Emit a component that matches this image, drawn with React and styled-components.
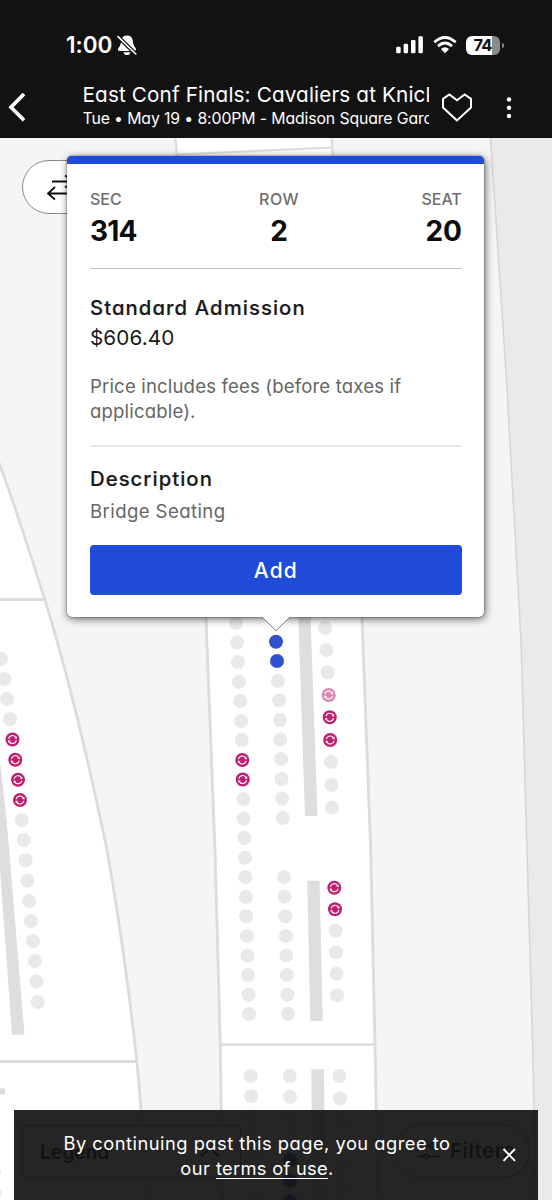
import React from "react";
import styled, { createGlobalStyle } from "styled-components";

const Global = createGlobalStyle`
  *, *::before, *::after { box-sizing: border-box; }
  body {
    margin: 0;
    font-family: Inter, "Liberation Sans", sans-serif;
    font-feature-settings: "cv11" 1, "calt" 0;
    color: #1a1a1a;
    background: #f5f5f5;
  }
`;

const Screen = styled.div`
  width: 552px;
  height: 1200px;
  display: flex;
  flex-direction: column;
  overflow: hidden;
`;

const TopBar = styled.header`
  flex: none;
  height: 138px;
  background: #121212;
  color: #fff;
  display: flex;
  flex-direction: column;
`;

const StatusBar = styled.div`
  height: 80px;
  padding: 10px 48.5px 0 66px;
  display: flex;
  align-items: center;
  justify-content: space-between;
`;

const StatusGroup = styled.div`
  display: flex;
  align-items: center;
  gap: ${(p) => p.$gap}px;
`;

const Clock = styled.span`
  font-size: 22.5px;
  font-weight: 600;
  line-height: 28px;
  letter-spacing: 0;
`;

const Battery = styled.span`
  width: 34px;
  height: 19px;
  margin-right: 4px;
  border-radius: 6px;
  background: linear-gradient(90deg, #fff 77%, #8b8b8b 77%);
  color: #121212;
  font-size: 16.5px;
  font-weight: 700;
  line-height: 19.5px;
  text-align: center;
  letter-spacing: -0.8px;
  position: relative;

  &::after {
    content: "";
    position: absolute;
    right: -4px;
    top: 7px;
    width: 2px;
    height: 5px;
    border-radius: 0 3px 3px 0;
    background: #8b8b8b;
  }
`;

const EventBar = styled.div`
  height: 58px;
  padding: 0 40px 0 8px;
  display: flex;
  align-items: flex-start;
`;

const IconSlot = styled.span`
  flex: none;
  display: flex;
  width: ${(p) => p.$w}px;
  margin: ${(p) => p.$m || "0"};
`;

const EventText = styled.div`
  width: 346px;
  flex: none;
  overflow: hidden;
  white-space: nowrap;
`;

const EventTitle = styled.div`
  margin-top: 1px;
  font-size: 20.7px;
  line-height: 28px;
  letter-spacing: 0.14px;
`;

const EventMeta = styled.div`
  font-size: 15.8px;
  line-height: 20px;
  letter-spacing: -0.11px;
`;

const MapArea = styled.main`
  flex: 1;
  position: relative;
  overflow: hidden;
`;

const MapSvg = styled.svg`
  display: block;
`;

const Pill = styled.button`
  position: absolute;
  top: ${(p) => p.$top}px;
  left: ${(p) => p.$left}px;
  width: ${(p) => p.$width}px;
  height: 54.5px;
  padding: 1px 0 0 23px;
  border: 1.3px solid #8a8a8a;
  border-radius: 28px;
  background: #fff;
  display: flex;
  align-items: center;
  gap: 11px;
  font: 600 20.5px/28px Inter, sans-serif;
  letter-spacing: 0.5px;
  color: #121212;
`;

const Legend = styled.button`
  position: absolute;
  top: 987px;
  left: 22px;
  width: 219px;
  height: 53px;
  padding: 0 20px 0 17px;
  border: 1.3px solid #8a8a8a;
  border-radius: 4px;
  background: #fff;
  display: flex;
  align-items: center;
  justify-content: space-between;
  font: 600 19.5px/28px Inter, sans-serif;
  font-feature-settings: "cv11" 1;
  letter-spacing: -0.2px;
  color: #121212;
`;

const Card = styled.section`
  position: absolute;
  top: 17.5px;
  left: 67.4px;
  width: 417px;
  height: 461.5px;
  padding: 23px 22.6px 0;
  border-top: 8px solid #1f4bd8;
  border-radius: 5px;
  background: #fff;
  box-shadow: 0 0 1.5px rgba(0, 0, 0, 0.8), 1px 2px 8px rgba(0, 0, 0, 0.6);
`;

const Pointer = styled.svg`
  position: absolute;
  left: 193.6px;
  top: 452.5px;
`;

const SeatInfo = styled.div`
  display: flex;
  justify-content: space-between;
  height: 82.5px;
  border-bottom: 1.4px solid #c3c3c3;
`;

const SeatField = styled.div`
  text-align: ${(p) => p.$align};
`;

const FieldLabel = styled.div`
  font-size: 16px;
  font-weight: 500;
  line-height: 24px;
  color: #6e6e6e;
  letter-spacing: ${(p) => p.$ls || 0}px;
`;

const FieldValue = styled.div`
  margin-top: 1px;
  font-size: 28px;
  font-weight: 700;
  line-height: 39px;
  color: #0d0d0d;
  letter-spacing: ${(p) => p.$ls || 0}px;
`;

const Heading = styled.h2`
  margin: ${(p) => p.$mt}px 0 0;
  font-size: 20.3px;
  font-weight: 500;
  line-height: 30px;
  letter-spacing: ${(p) => p.$ls}px;
  -webkit-text-stroke: 0.2px currentColor;
`;

const Price = styled.div`
  font-size: 20.7px;
  line-height: 30px;
  letter-spacing: 0.1px;
`;

const Note = styled.p`
  margin: ${(p) => p.$mt}px 0 0;
  font-size: 18.6px;
  line-height: 24.7px;
  letter-spacing: ${(p) => p.$ls}px;
  color: #666;
  white-space: nowrap;
`;

const Divider = styled.hr`
  margin: 22px 0 0;
  border: 0;
  height: 1.5px;
  background: #e8e8e8;
`;

const AddButton = styled.button`
  display: block;
  width: 100%;
  height: 49.5px;
  margin-top: 22px;
  border: 0;
  border-radius: 4px;
  background: #1f4bd8;
  color: #fff;
  font: 500 21px/49px Inter, sans-serif;
  letter-spacing: 1.2px;
`;

const Consent = styled.div`
  position: absolute;
  left: 14px;
  top: 972px;
  width: 524px;
  height: 90px;
  background: rgba(18, 18, 18, 0.92);
  color: #fff;
  display: flex;
  align-items: center;
`;

const ConsentText = styled.p`
  margin: 1px 0 0;
  width: 486px;
  text-align: center;
  font-size: 18.3px;
  line-height: 25px;
  letter-spacing: 0.5px;

  u {
    letter-spacing: 0.3px;
    text-underline-offset: 3px;
    text-decoration-thickness: 1.4px;
    text-decoration-skip-ink: none;
  }
`;

const COLUMNS = {
  left: {
    seats: [[1, 659], [4.5, 679], [7, 699], [10, 719], [12.5, 739.5, "r"], [15.3, 759.7, "r"], [18, 779.7, "r"], [20, 800, "r"], [21.7, 820], [23.7, 840], [25.5, 860.3], [27.3, 880.7], [29, 901], [31, 921], [33, 941], [35, 961], [36.5, 981.5], [37.7, 1002], [-6, 1172], [-5.5, 1193]],
  },
  a: {
    seats: [[236, 623], [237, 642.7], [238, 662], [239, 681.7], [240.3, 701], [241, 721], [241.7, 740], [242.3, 760, "r"], [242.7, 779.5, "r"], [243.3, 799], [243.7, 818.7], [244.3, 838], [245, 857.7], [245.3, 877], [246, 897], [246.3, 916.3], [247, 936], [247.5, 955.7], [248, 975], [248.6, 994.7], [249, 1014], [250.7, 1076], [251.3, 1096.3], [251.6, 1116.5], [252, 1137], [252.3, 1157], [252.6, 1177], [253, 1197]],
  },
  b: {
    seats: [[276, 641.7, "b"], [277, 661, "b"], [278, 681], [279, 700.3], [280, 720], [280.3, 739.5], [281, 759], [281.5, 779], [282, 798.5], [282.7, 818], [284, 877], [284.6, 896.7], [285.3, 916.2], [286, 936], [286.3, 955.5], [287, 975], [287.4, 994.7], [288, 1014], [289.7, 1076], [290, 1096.7], [290, 1118], [290, 1139], [290, 1160, "b"], [290, 1181, "b"], [290, 1201, "b"]],
  },
  c: {
    seats: [[325, 628], [326.3, 650], [327.7, 672.3], [328.7, 695, "p"], [329.7, 717.3, "r"], [330.2, 740, "r"], [331, 762], [331.5, 785], [332, 807.5], [334.3, 887.7, "r"], [335, 909.3, "r"], [335.5, 930.8], [336, 952.3], [336.6, 973.8], [337.2, 995.3], [339.5, 1076], [340, 1098.3], [340.5, 1121], [341, 1143], [341.3, 1166], [341.6, 1188]],
  },
};

const SEAT_FILL = { r: "#bd2070", p: "#dc86b3", b: "#3152cf" };

function Seat({ x, y, kind }) {
  const resale = kind === "r" || kind === "p";
  return (
    <g transform={`translate(${x} ${y})`}>
      <circle r="7" fill={SEAT_FILL[kind] || "#e9e9e9"} />
      {resale && (
        <g fill="none" stroke="#fff" strokeWidth="1.15">
          <path d="M-3.9 -0.9A4 4 0 0 1 3.2 -2.4" />
          <path d="M3.9 0.9A4 4 0 0 1 -3.2 2.4" />
          <path d="M1.8 -1.3L4.4 -0.6L4.4 -3.3Z" fill="#fff" stroke="none" />
          <path d="M-1.8 1.3L-4.4 0.6L-4.4 3.3Z" fill="#fff" stroke="none" />
        </g>
      )}
    </g>
  );
}

function VenueMap() {
  return (
    <MapSvg width="552" height="1062" viewBox="0 138 552 1062">
      <rect y="138" width="552" height="1062" fill="#f5f5f5" />
      <path d="M490 130L506.5 380L521 640L533 1060L536 1210H560V130Z" fill="#eaeaea" stroke="#d6d6d6" strokeWidth="1.6" />
      <g fill="#fff" stroke="#dcdcdc" strokeWidth="2.8">
        <path d="M175 130L177 160L333 160L331.500 130Z" strokeWidth="2.200" />
        <path d="M177 154.500L332 147.500" strokeWidth="2" />
        <path d="M-5 452C20 518 30 555 45 600C77 704 99 812 107 850C123 940 137 1050 141 1110Q145 1155 147 1210H-5Z" />
        <path d="M-5 599.500H44.500M-5 1061.500H137.500" />
        <path d="M205 590C208 680 213 780 215 850C217 930 219.500 1010 220.300 1045L222.500 1210H378L375 1045C373.500 980 372 900 370.700 850L362 618L361 590Z" />
        <path d="M220.500 1044.600H375" />
      </g>
      <g fill="#dedede">
        <path d="M-6 735L0.500 765Q7 820 10 860L24.500 1034.700H12L0 870L-6 830Z" />
        <path d="M-2 1088.300H5V1094.500H-2Z" />
        <path d="M297.700 600H310L317.500 816H305Z" />
        <path d="M307.200 880.700H319.600L322.700 1021H310.300Z" />
        <path d="M311.300 1069.300H323.900L325.500 1200H312.500Z" />
      </g>
      {Object.entries(COLUMNS).map(([name, col]) =>
        col.seats.map(([x, y, kind]) => <Seat key={name + y} x={x} y={y} kind={kind} />)
      )}
    </MapSvg>
  );
}

const BellOff = () => (
  <svg width="20" height="21" viewBox="0 0 20 21">
    <path d="M10 0.400C13.200 0.400 15.200 2.300 15.700 5.200C16.200 9 16.600 11 18.600 13C19.400 14.300 19 15.900 17.500 15.900H2.500C1 15.900 0.600 14.300 1.400 13C3.400 11 3.800 9 4.300 5.200C4.800 2.300 6.800 0.400 10 0.400Z" fill="#fff" />
    <path d="M6.500 17.200H13.500C13 19.200 11.800 20 10 20S7 19.200 6.500 17.200Z" fill="#fff" />
    <path d="M0.600 1.200L19 19.200" stroke="#121212" strokeWidth="4" />
    <path d="M1 1.600L18.800 19" stroke="#fff" strokeWidth="1.600" strokeLinecap="round" />
  </svg>
);

const Signal = () => (
  <svg width="28" height="18" viewBox="0 0 28 18" fill="#fff">
    <rect x="0.200" y="10.800" width="4.500" height="6.500" rx="1.300" />
    <rect x="7.600" y="7.800" width="4.500" height="9.500" rx="1.300" />
    <rect x="15" y="4" width="4.500" height="13.300" rx="1.300" />
    <rect x="22.400" y="0.300" width="4.500" height="17" rx="1.300" />
  </svg>
);

const Wifi = () => (
  <svg width="24" height="18" viewBox="0 0 24 18">
    <g fill="none" stroke="#fff" strokeWidth="2.800">
      <path d="M1.300 6.300Q12 -3.200 22.700 6.300" />
      <path d="M5 10.100Q12 4 19 10.100" />
    </g>
    <path d="M12 17.300L7.900 13.100Q12 9.600 16.100 13.100Z" fill="#fff" />
  </svg>
);

export default function App() {
  return (
    <Screen>
      <Global />
      <TopBar>
        <StatusBar>
          <StatusGroup $gap={5}>
            <Clock>1:00</Clock>
            <BellOff />
          </StatusGroup>
          <StatusGroup $gap={9}>
            <Signal />
            <Wifi />
            <Battery>74</Battery>
          </StatusGroup>
        </StatusBar>
        <EventBar>
          <IconSlot $w={18} $m="12px 56.5px 0 0">
            <svg width="18" height="30" viewBox="0 0 18 30" fill="none" stroke="#fff" strokeWidth="3.700">
              <path d="M16 2L3 15.300L16 28.300" />
            </svg>
          </IconSlot>
          <EventText>
            <EventTitle>East Conf Finals: Cavaliers at Knicks</EventTitle>
            <EventMeta>Tue • May 19 • 8:00PM - Madison Square Garden</EventMeta>
          </EventText>
          <IconSlot $w={32} $m="12px 33px 0 12.5px">
            <svg width="32" height="31" viewBox="0 0 32 31" fill="none" stroke="#fff" strokeWidth="2">
              <path d="M16 28.500L2 15.500V6.800L8.400 2.500L16 8.200L23.600 2.500L30 6.800V15.500Z" />
            </svg>
          </IconSlot>
          <IconSlot $w={6} $m="17px 0 0">
            <svg width="6" height="24" viewBox="0 0 6 24" fill="#fff">
              <circle cx="3" cy="2.500" r="2.200" />
              <circle cx="3" cy="10.800" r="2.200" />
              <circle cx="3" cy="19" r="2.200" />
            </svg>
          </IconSlot>
        </EventBar>
      </TopBar>

      <MapArea>
        <VenueMap />
        <Pill $top={21.5} $left={22} $width={110} aria-label="Swap">
          <svg width="34" height="28" viewBox="0 0 34 28" fill="none" stroke="#121212" strokeWidth="1.800">
            <path d="M6 8.500H30M19 2.500L28 8.500L19 14.500M28 20.500H2M9 14L2 20.500L9 26.500" />
          </svg>
        </Pill>
        <Legend>
          <span>Legend</span>
          <svg width="20" height="12" viewBox="0 0 20 12" fill="none" stroke="#121212" strokeWidth="1.800">
            <path d="M1 10.500L10 1.800L19 10.500" />
          </svg>
        </Legend>
        <Pill $top={985.5} $left={394} $width={136}>
          <svg width="21" height="20" viewBox="0 0 21 20" fill="none" stroke="#121212" strokeWidth="1.500">
            <path d="M0 4.500H12M17 4.500H21M0 15.500H6M11 15.500H21" />
            <circle cx="14.500" cy="4.500" r="2.200" />
            <circle cx="8.500" cy="15.500" r="2.200" />
          </svg>
          Filters
        </Pill>

        <Card>
          <SeatInfo>
            <SeatField $align="left">
              <FieldLabel>SEC</FieldLabel>
              <FieldValue $ls={-0.8}>314</FieldValue>
            </SeatField>
            <SeatField $align="center">
              <FieldLabel $ls={0.5}>ROW</FieldLabel>
              <FieldValue>2</FieldValue>
            </SeatField>
            <SeatField $align="right">
              <FieldLabel>SEAT</FieldLabel>
              <FieldValue $ls={-0.1}>20</FieldValue>
            </SeatField>
          </SeatInfo>
          <Heading $mt={24} $ls={1.08}>Standard Admission</Heading>
          <Price>$606.40</Price>
          <Note $mt={21} $ls={0.15}>
            Price includes fees (before taxes if
            <br />
            applicable).
          </Note>
          <Divider />
          <Heading $mt={17} $ls={1.05}>Description</Heading>
          <Note $mt={4.7} $ls={0.4}>Bridge Seating</Note>
          <AddButton>Add</AddButton>
          <Pointer width="30" height="16" viewBox="0 0 30 16">
            <path d="M0 0H30L29 1L15 14.700L1 1Z" fill="#fff" />
            <path d="M1 1L15 14.700L29 1" fill="none" stroke="#777" strokeWidth="1" />
          </Pointer>
        </Card>

        <Consent>
          <ConsentText>
            By continuing past this page, you agree to
            <br />
            our <u>terms of use</u>.
          </ConsentText>
          <svg width="16" height="16" viewBox="0 0 16 16" stroke="#fff" strokeWidth="1.900">
            <path d="M3.500 2L15 13.800M15 2L3.500 13.800" />
          </svg>
        </Consent>
      </MapArea>
    </Screen>
  );
}
